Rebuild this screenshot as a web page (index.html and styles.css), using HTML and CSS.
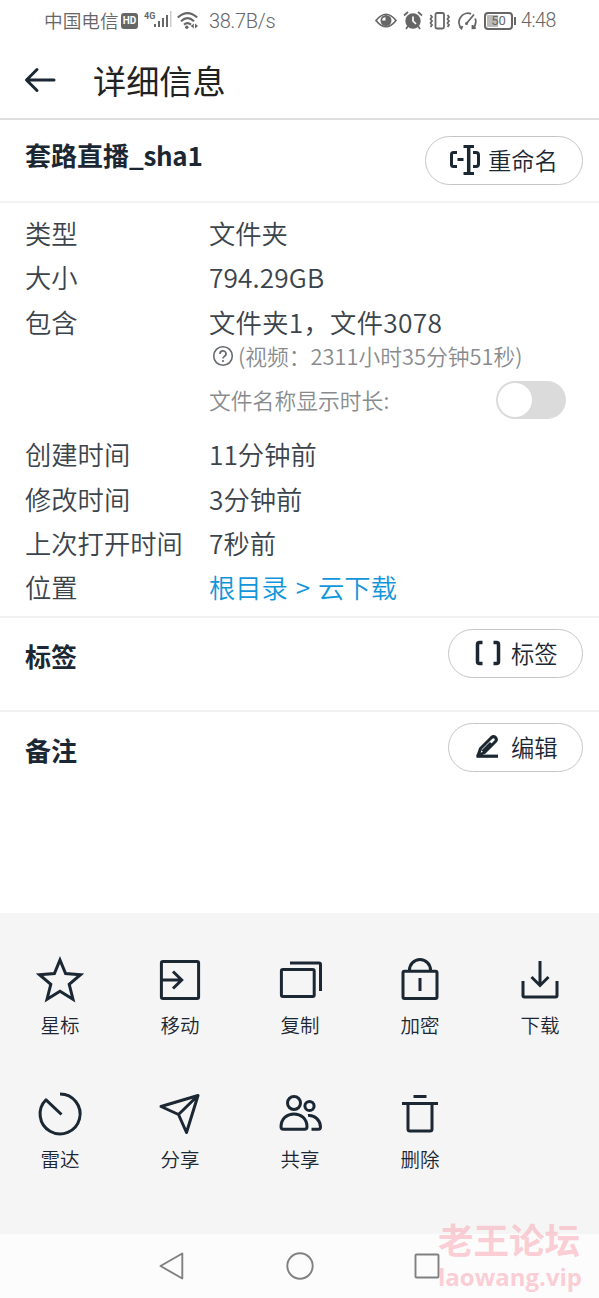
FILE: index.html
```html
<!DOCTYPE html>
<html lang="zh-CN">
<head>
<meta charset="utf-8">
<title>详细信息</title>
<link rel="stylesheet" href="styles.css">
</head>
<body>
<div class="screen">
  <div class="status">
    <span class="carrier">中国电信</span>
    <span class="hd">HD</span>
    <span class="net">4G</span>
    <svg class="signal" width="18" height="17" viewBox="0 0 18 17"><g fill="#666"><rect x="0" y="13" width="2" height="3"/><rect x="4" y="10" width="2" height="6"/><rect x="8" y="7" width="2" height="9"/><rect x="12" y="4" width="2" height="12"/></g><rect x="16" y="0" width="1.5" height="16" fill="#ccc"/></svg>
    <svg class="wifi" width="21" height="18" viewBox="0 0 21 18"><g fill="none" stroke="#666" stroke-width="2.100"><path d="M.8 5.500Q10.500-3.300 20.200 5.500"/><path d="M4 9.200Q10.500 3.200 17 9.200"/><path d="M7 12.600Q10.500 9.500 14 12.600"/></g><circle cx="9.800" cy="15.300" r="1.700" fill="#666"/><path d="M16.800 11.500v5l-3-2.500zM18 11.500v5l3-2.500z" fill="#666"/></svg>
    <span class="speed">38.7B/s</span>
    <div class="system">
      <svg width="22" height="15" viewBox="0 0 22 15"><path d="M1 7.500Q11-5 21 7.500Q11 20 1 7.500z" fill="none" stroke="#666" stroke-width="1.700"/><circle cx="11" cy="7.500" r="5.500" fill="#666"/><path d="M10.500 7.500V4.200a3.300 3.300 0 0 0-3.300 3.300z" fill="#fff"/></svg>
      <svg width="20" height="19" viewBox="0 0 20 19"><circle cx="10" cy="10" r="7.700" fill="#666"/><path d="M1 4.500L5 1M15 1l4 3.500M5 15l-2 3M15 15l2 3" stroke="#666" stroke-width="1.700"/><path d="M10 5.500V10l3 3" fill="none" stroke="#fff" stroke-width="1.700"/></svg>
      <svg width="22" height="18" viewBox="0 0 22 18"><rect x="6.500" y="1" width="8.500" height="15.500" rx="1.500" fill="none" stroke="#666" stroke-width="1.800"/><path d="M1.500 3l1.500 2-1.500 2 1.500 2-1.500 2 1.500 2-1.500 2M18.500 3l1.500 2-1.500 2 1.500 2-1.500 2 1.500 2-1.500 2" fill="none" stroke="#666" stroke-width="1.800"/></svg>
      <svg width="21" height="18" viewBox="0 0 21 18"><path d="M4.500 16.500A9 9 0 0 1 14 1.800M18.200 6.500A9 9 0 0 1 16 16M2.500 14.500l2 2 1-2.500M18.800 16L15.500 16.300V13M9.500 11.500L17 2.500" fill="none" stroke="#666" stroke-width="1.800"/><circle cx="9.500" cy="11.500" r="1.500" fill="#666"/></svg>
      <span class="battery"><span>50</span></span>
      <span class="clock">4:48</span>
    </div>
  </div>

  <header class="header">
    <svg width="32" height="26" viewBox="0 0 32 26"><path d="M30 13H3M13 2.500L2.500 13L13 23.500" fill="none" stroke="#1b2733" stroke-width="3" stroke-linecap="round" stroke-linejoin="round"/></svg>
    <h1>详细信息</h1>
  </header>

  <section class="name">
    <h2>套路直播<span>_sha1</span></h2>
    <button class="pill pill-wide">
      <svg width="32" height="32" viewBox="0 0 32 32"><g fill="none" stroke="#1b2733" stroke-width="3"><path d="M8 8.500H4.500Q2.500 8.500 2.500 10.500V20.500Q2.500 22.500 4.500 22.500H8M8.500 15.500H14.500M14.500 2.500H25M14.500 29.500H25M24 8.500H27Q29.500 8.500 29.500 11V20Q29.500 22.500 27 22.500H24"/><path stroke-width="3.500" d="M19.700 2.500V29.500"/></g></svg>
      重命名
    </button>
  </section>

  <dl class="details">
    <dt>类型</dt><dd>文件夹</dd>
    <dt>大小</dt><dd class="size">794.29GB</dd>
    <dt>包含</dt><dd class="contains">文件夹1，文件3078</dd>
    <dd class="duration"><svg width="22" height="22" viewBox="0 0 22 22"><circle cx="11" cy="11" r="9.300" fill="none" stroke="#666a6e" stroke-width="1.600"/><path d="M8 9a3 3 0 1 1 4.300 2.500Q11 12.200 11 13.500" fill="none" stroke="#666a6e" stroke-width="1.700"/><circle cx="11" cy="16" r="1.100" fill="#666a6e"/></svg><span>(视频：2311小时35分钟51秒)</span></dd>
    <dd class="show-duration"><span>文件名称显示时长:</span><span class="toggle"></span></dd>
    <dt>创建时间</dt><dd>11分钟前</dd>
    <dt>修改时间</dt><dd>3分钟前</dd>
    <dt>上次打开时间</dt><dd>7秒前</dd>
    <dt>位置</dt><dd class="path">根目录 &gt; 云下载</dd>
  </dl>

  <section class="block tags">
    <h2>标签</h2>
    <button class="pill">
      <svg width="28" height="28" viewBox="0 0 28 28"><path d="M8.500 3.500H5.500Q3.500 3.500 3.500 5.500V22.500Q3.500 24.500 5.500 24.500H8.500M19.500 3.500H22.500Q24.500 3.500 24.500 5.500V22.500Q24.500 24.500 22.500 24.500H19.500" fill="none" stroke="#1b2733" stroke-width="3.500"/></svg>
      标签
    </button>
  </section>

  <section class="block notes">
    <h2>备注</h2>
    <button class="pill">
      <svg width="28" height="28" viewBox="0 0 28 28"><path d="M2.500 23.200H24" stroke="#1b2733" stroke-width="3.200"/><path d="M4 22.500L6.500 15.500L17.500 4.500Q19.500 2.800 21.500 4.500Q23.300 6.500 21.500 8.500L10.500 19.500ZM8.500 18.500L17 10" fill="none" stroke="#1b2733" stroke-width="3" stroke-linejoin="round"/></svg>
      编辑
    </button>
  </section>

  <div class="actions">
    <div class="action"><svg viewBox="0 0 48 48"><path d="M24 4L29.600 17.500L44.500 18.700L33.200 28.400L37 43.200L24 35.300L11 43.200L14.800 28.400L3.500 18.700L18.400 17.500Z"/></svg>星标</div>
    <div class="action"><svg viewBox="0 0 48 48"><rect x="5.400" y="5.400" width="37.200" height="37.200" rx="1.500"/><path d="M5.400 24H26M17 15.500L25.700 24L17 32.500"/></svg>移动</div>
    <div class="action"><svg viewBox="0 0 48 48"><rect x="5.400" y="13.400" width="32.800" height="27.200" rx="1.500"/><path d="M14 7H43Q44.500 7 44.500 8.500V35"/></svg>复制</div>
    <div class="action"><svg viewBox="0 0 48 48"><rect x="7" y="15.300" width="34" height="27.300" rx="1.500"/><path d="M13.500 15V14a10.500 10.500 0 0 1 21 0V15M24 22V35"/></svg>加密</div>
    <div class="action"><svg viewBox="0 0 48 48"><path d="M24 5V29M15.500 21L24 29.500L32.500 21M7 25V39.500Q7 41 8.500 41H39.500Q41 41 41 39.500V25"/></svg>下载</div>
    <div class="action"><svg viewBox="0 0 48 48"><path d="M24 4A20 20 0 1 1 10 9.800L25.500 24.500" stroke-linejoin="round"/></svg>雷达</div>
    <div class="action"><svg viewBox="0 0 48 48"><path d="M5 16.500L42 5.500L30.500 42.500L22.500 24.500ZM22.500 24.500L42 5.500" stroke-linejoin="round"/></svg>分享</div>
    <div class="action"><svg viewBox="0 0 48 48"><circle cx="18" cy="13" r="6.500"/><circle cx="33.500" cy="16" r="4.600"/><path d="M7.500 39.200H28.500Q31 39.200 31 37C31 19.500 5 19.500 5 37Q5 39.200 7.500 39.200ZM32 25.500C39 24.500 44.500 31 44.500 37Q44.500 39.200 42.500 39.200H35.500"/></svg>共享</div>
    <div class="action"><svg viewBox="0 0 48 48"><path d="M17.500 6.500H30.500M6 13.500H42M12 13.500V39Q12 41 14 41H34Q36 41 36 39V13.500"/></svg>删除</div>
  </div>

  <nav class="nav">
    <svg width="30" height="30" viewBox="0 0 30 30"><path d="M25.300 2.500V27.500L3.500 15Z"/></svg>
    <svg width="30" height="30" viewBox="0 0 30 30"><circle cx="15" cy="15" r="12.700"/></svg>
    <svg class="recent" width="30" height="30" viewBox="0 0 30 30"><rect x="3.500" y="3.500" width="23" height="23" rx="1"/></svg>
    <div class="watermark"><span class="forum">老王论坛</span><span class="site">laowang.vip</span></div>
  </nav>
</div>
</body>
</html>
```
FILE: styles.css
```css
* { box-sizing: border-box; }
body { margin: 0; background: #fff; font-family: "Noto Sans CJK SC", sans-serif; color: #1b2733; }
svg { display: block; flex: none; }
h1, h2, dl, dd { margin: 0; }
.screen { width: 599px; height: 1298px; display: flex; flex-direction: column; overflow: hidden; }

.status { height: 41px; flex: none; display: flex; align-items: center; padding-left: 44px; color: #666; font-weight: 350; white-space: nowrap; }
.carrier { font-size: 18.700px; width: 77px; line-height: 26px; padding-bottom: 2px; }
.hd { width: 17px; height: 16px; border-radius: 3px; background: #666; color: #fff; font: 700 10px/16px "Roboto", sans-serif; text-align: center; }
.net { font: 700 9px/10px "Roboto", sans-serif; margin: 0 0 9px 6px; width: 10px; }
.signal { margin-top: -2px; }
.wifi { margin-left: 5px; }
.speed { font: 300 20px/24px "Roboto", sans-serif; margin-left: 11px; letter-spacing: -.3px; }
.system { margin-left: auto; display: flex; align-items: center; gap: 6px; padding-right: 42px; }
.battery { position: relative; width: 29px; height: 18px; border: 2px solid #666; border-radius: 4px; font: 400 13px/14px "Roboto", sans-serif; text-align: center; background: linear-gradient(90deg, #bbb 50%, #fff 50%); box-shadow: inset 0 0 0 1px #fff; }
.battery::after { content: ""; position: absolute; right: -5px; top: 3px; width: 2px; height: 8px; background: #666; }
.clock { font: 300 19.500px/24px "Roboto", sans-serif; margin-left: 2px; width: 36px; letter-spacing: -.4px; }

.header { height: 79px; flex: none; display: flex; align-items: center; padding-left: 24px; gap: 37px; border-bottom: 2px solid #dedede; }
h1 { font-size: 33.200px; line-height: 48px; font-weight: 400; color: #222; }
h2 { font-size: 26px; line-height: 38px; font-weight: 700; }
.name { height: 83px; flex: none; display: flex; justify-content: space-between; padding: 16px 16px 0 25px; border-bottom: 2px solid #f3f3f3; }
.name h2 span { letter-spacing: -.3px; }
.pill { width: 135px; height: 49px; border: 1.500px solid #c4c7c9; border-radius: 25px; background: #fff; color: #1b2733; font: 350 23.300px/36px "Noto Sans CJK SC", sans-serif; display: flex; align-items: center; justify-content: flex-start; gap: 9px; padding: 0 0 1px 25px; white-space: nowrap; }
.pill-wide { width: 158px; gap: 7px; padding-left: 23px; }

.details { height: 413px; flex: none; display: grid; grid-template-columns: 184px 1fr; grid-template-rows: 44.400px 44.400px 41.400px 30px 61px 44.400px 44.400px 44.400px 44.400px; padding: 8px 33px 0 25px; font-size: 26.300px; font-weight: 350; line-height: 44px; color: #3b444c; white-space: nowrap; }
.duration, .show-duration { grid-column: 2; display: flex; align-items: center; font-size: 21.800px; line-height: 30px; color: #888b8e; }
.duration { padding-left: 3px; gap: 4px; }
.show-duration { height: 58px; justify-content: space-between; }
.size { letter-spacing: .1px; }
.contains { letter-spacing: .3px; }
.toggle { width: 70px; height: 38px; padding: 2px; border-radius: 19px; background: #dbdbdb; }
.toggle::before { content: ""; display: block; width: 34px; height: 34px; border-radius: 50%; background: #fff; }
.path { color: #1296db; word-spacing: 2px; }

.block { flex: none; display: flex; justify-content: space-between; padding: 11px 16px 0 25px; border-top: 2px solid #f1f1f1; }
.block h2 { padding-top: 8px; }
.tags { height: 94px; }
.notes { height: 203px; }

.actions { height: 321px; flex: none; background: #f5f5f5; display: grid; grid-template-columns: repeat(5, 120px); grid-auto-rows: 133.500px; padding-top: 43px; }
.action { display: flex; flex-direction: column; align-items: center; gap: 6px; font-size: 19.500px; font-weight: 350; line-height: 30px; }
.action svg { width: 48px; height: 48px; fill: none; stroke: #1b2733; stroke-width: 3; }

.nav { position: relative; flex: 1; background: #fcfcfc; display: flex; align-items: center; padding-left: 157px; gap: 98px; }
.nav svg { fill: none; stroke: #808080; stroke-width: 1.900; stroke-linejoin: round; }
.nav .recent { margin-left: -1px; }
.watermark { position: absolute; left: 438px; top: -17px; display: flex; flex-direction: column; gap: 2px; color: rgba(249, 182, 192, .68); font-weight: 700; white-space: nowrap; }
.forum { font-size: 35.500px; line-height: 44px; }
.site { font: 700 24px/28px "Open Sans", sans-serif; }
```
